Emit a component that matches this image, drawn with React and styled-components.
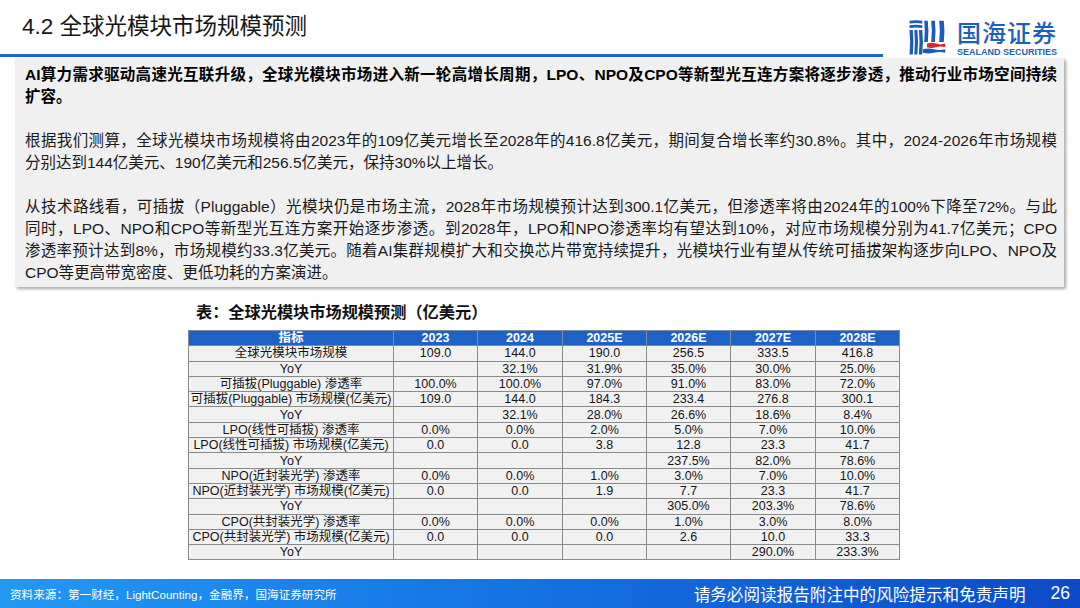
import React from "react";
import styled, { createGlobalStyle } from "styled-components";

const FONT = `"Liberation Sans", "Noto Sans CJK SC", sans-serif`;

const rows = [
  ["全球光模块市场规模", "109.0", "144.0", "190.0", "256.5", "333.5", "416.8"],
  ["YoY", "", "32.1%", "31.9%", "35.0%", "30.0%", "25.0%"],
  ["可插拔(Pluggable) 渗透率", "100.0%", "100.0%", "97.0%", "91.0%", "83.0%", "72.0%"],
  ["可插拔(Pluggable) 市场规模(亿美元)", "109.0", "144.0", "184.3", "233.4", "276.8", "300.1"],
  ["YoY", "", "32.1%", "28.0%", "26.6%", "18.6%", "8.4%"],
  ["LPO(线性可插拔) 渗透率", "0.0%", "0.0%", "2.0%", "5.0%", "7.0%", "10.0%"],
  ["LPO(线性可插拔) 市场规模(亿美元)", "0.0", "0.0", "3.8", "12.8", "23.3", "41.7"],
  ["YoY", "", "", "", "237.5%", "82.0%", "78.6%"],
  ["NPO(近封装光学) 渗透率", "0.0%", "0.0%", "1.0%", "3.0%", "7.0%", "10.0%"],
  ["NPO(近封装光学) 市场规模(亿美元)", "0.0", "0.0", "1.9", "7.7", "23.3", "41.7"],
  ["YoY", "", "", "", "305.0%", "203.3%", "78.6%"],
  ["CPO(共封装光学) 渗透率", "0.0%", "0.0%", "0.0%", "1.0%", "3.0%", "8.0%"],
  ["CPO(共封装光学) 市场规模(亿美元)", "0.0", "0.0", "0.0", "2.6", "10.0", "33.3"],
  ["YoY", "", "", "", "", "290.0%", "233.3%"],
];

const heads = ["指标", "2023", "2024", "2025E", "2026E", "2027E", "2028E"];
const colWidths = [205, 84, 85, 84, 84, 85, 84];

const paragraphs = [
  {
    bold: true,
    lines: [
      "AI算力需求驱动高速光互联升级，全球光模块市场进入新一轮高增长周期，LPO、NPO及CPO等新型光互连方案将逐步渗透，推动行业市场空间持续",
      "扩容。",
    ],
  },
  {
    lines: [
      "根据我们测算，全球光模块市场规模将由2023年的109亿美元增长至2028年的416.8亿美元，期间复合增长率约30.8%。其中，2024-2026年市场规模",
      "分别达到144亿美元、190亿美元和256.5亿美元，保持30%以上增长。",
    ],
  },
  {
    lines: [
      "从技术路线看，可插拔（Pluggable）光模块仍是市场主流，2028年市场规模预计达到300.1亿美元，但渗透率将由2024年的100%下降至72%。与此",
      "同时，LPO、NPO和CPO等新型光互连方案开始逐步渗透。到2028年，LPO和NPO渗透率均有望达到10%，对应市场规模分别为41.7亿美元；CPO",
      "渗透率预计达到8%，市场规模约33.3亿美元。随着AI集群规模扩大和交换芯片带宽持续提升，光模块行业有望从传统可插拔架构逐步向LPO、NPO及",
      "CPO等更高带宽密度、更低功耗的方案演进。",
    ],
  },
];

const SealandMark = () => (
  <svg width="38" height="40" viewBox="0 0 38 40">
    <g fill="#1d5bb8">
      <path d="M1.5 2.8 Q8 1.8 14.3 2.8 V5.6 Q8 4.6 1.5 5.6Z" />
      <path d="M1.5 7.2 Q8 6.2 14.3 7.2 V10 Q8 9 1.5 10Z" />
      <path d="M1.5 12 Q2.8 24 1.5 36.5 H4.8 Q6.1 24 4.8 12Z" />
      <path d="M6.3 12 Q7.6 24 6.3 36.5 H9.4 Q10.7 24 9.4 12Z" />
      <path d="M10.9 12 Q12.2 24 10.9 36.5 H14.3 Q15.6 24 14.3 12Z" />
      <path d="M16.2 2.8 Q17.5 13 16.2 24 H19.8 Q21.1 13 19.8 2.8Z" />
      <path d="M23.2 2.8 Q24.5 13 23.2 24 H26.9 Q28.2 13 26.9 2.8Z" />
      <path d="M31.2 2.8 Q32.5 13 31.2 24 H35.8 Q37.1 13 35.8 2.8Z" />
      <path d="M15 31.2 Q20.5 29.6 26 31.2 T37.2 31.2 V34.8 Q31.6 33.2 26 34.8 T15 34.8Z" />
    </g>
    <path d="M19 25.6 Q23.5 24 28 25.6 T37.2 25.6 V29.2 Q32.6 27.6 28 29.2 T19 29.2Z" fill="#d42a2f" />
  </svg>
);

const App = () => {
  return (
    <>
      <GlobalStyle />
      <Page>
        <Header>
          <TitleBar>
            <Title>4.2 全球光模块市场规模预测</Title>
          </TitleBar>
          <Logo>
            <SealandMark />
            <LogoText>
              <LogoName>国海证券</LogoName>
              <LogoSub>SEALAND SECURITIES</LogoSub>
            </LogoText>
          </Logo>
        </Header>

        <Summary>
          {paragraphs.map((p, i) => (
            <Para key={i}>
              {p.lines.map((l, j) => (
                <Line key={j} bold={p.bold} full={j < p.lines.length - 1}>
                  {l}
                </Line>
              ))}
            </Para>
          ))}
        </Summary>

        <TableSection>
          <Caption>表：全球光模块市场规模预测（亿美元）</Caption>
          <DataTable>
            <colgroup>
              {colWidths.map((w, i) => (
                <col key={i} style={{ width: w }} />
              ))}
            </colgroup>
            <thead>
              <tr>
                {heads.map((h) => (
                  <Th key={h}>{h}</Th>
                ))}
              </tr>
            </thead>
            <tbody>
              {rows.map((r, i) => (
                <tr key={i}>
                  {r.map((c, j) => (
                    <Td key={j}>{c}</Td>
                  ))}
                </tr>
              ))}
            </tbody>
          </DataTable>
        </TableSection>

        <Footer>
          <Source>资料来源：第一财经，LightCounting，金融界，国海证券研究所</Source>
          <Disclaimer>
            请务必阅读报告附注中的风险提示和免责声明
            <PageNo>26</PageNo>
          </Disclaimer>
        </Footer>
      </Page>
    </>
  );
};

export default App;

const GlobalStyle = createGlobalStyle`
  html, body {
    margin: 0;
    padding: 0;
    background: #fff;
  }
  body {
    font-family: ${FONT};
    color: #111;
  }
`;
const Page = styled.div`
  width: 1080px;
  height: 608px;
  overflow: hidden;
  display: flex;
  flex-direction: column;
  background: #fff;
`;
const Header = styled.div`
  display: flex;
  height: 58px;
  flex-shrink: 0;
`;
const TitleBar = styled.div`
  width: 883px;
  height: 57px;
  box-sizing: border-box;
  border-bottom: 3px solid #1e68c4;
  display: flex;
  align-items: center;
  padding-left: 22px;
`;
const Title = styled.h1`
  margin: 0;
  font-size: 22.5px;
  line-height: 28px;
  font-weight: 400;
  color: #161616;
`;
const Logo = styled.div`
  display: flex;
  align-items: flex-start;
  gap: 11px;
  margin-left: 25px;
  padding-top: 18px;
`;
const LogoText = styled.div`
  display: flex;
  flex-direction: column;
  align-items: flex-start;
`;
const LogoName = styled.div`
  font-family: "Noto Sans CJK SC", sans-serif;
  font-size: 24px;
  line-height: 27px;
  font-weight: 500;
  color: #1f5fbb;
  letter-spacing: 1px;
`;
const LogoSub = styled.div`
  margin-top: 2px;
  font-size: 9px;
  line-height: 10px;
  font-weight: 700;
  color: #1f5fbb;
  white-space: nowrap;
`;
const Summary = styled.div`
  margin-left: 15px;
  width: 1049px;
  box-sizing: border-box;
  padding: 6px 7px 3px 10px;
  background: #f0f0f0;
  box-shadow: 2px 2px 3px rgba(0, 0, 0, 0.35);
  font-size: 15.5px;
  line-height: 22px;
  color: #1a1a1a;
`;
const Para = styled.div`
  & + & {
    margin-top: 22px;
  }
`;
const Line = styled.div`
  font-weight: ${(props) => (props.bold ? 700 : 400)};
  color: ${(props) => (props.bold ? "#000" : "#1a1a1a")};
  text-align: justify;
  text-align-last: ${(props) => (props.full ? "justify" : "left")};
`;
const TableSection = styled.div`
  padding-left: 188px;
  margin-top: 15px;
`;
const Caption = styled.div`
  margin-left: 8px;
  font-size: 16.2px;
  line-height: 20px;
  font-weight: 700;
  color: #111;
  margin-bottom: 8px;
`;
const DataTable = styled.table`
  width: 711px;
  table-layout: fixed;
  border-collapse: collapse;
  font-size: 12.5px;
`;
const Th = styled.th`
  height: 14.3px;
  padding: 0;
  line-height: 14px;
  background: #1e62c6;
  color: #fff;
  font-weight: 700;
  border: 1px solid #7a8aa0;
  text-align: center;
`;
const Td = styled.td`
  height: 14.3px;
  padding: 0;
  line-height: 14px;
  background: #f1f1f1;
  color: #151515;
  border: 1px solid #8a8a8a;
  text-align: center;
  white-space: nowrap;
  overflow: hidden;
`;
const Footer = styled.div`
  margin-top: auto;
  height: 29px;
  flex-shrink: 0;
  display: flex;
  align-items: center;
  justify-content: space-between;
  padding: 0 10px;
  background: linear-gradient(90deg, #2399f3 0%, #1679e6 40%, #0c4ac8 100%);
  color: #fff;
`;
const Source = styled.div`
  font-size: 11.6px;
`;
const Disclaimer = styled.div`
  display: flex;
  align-items: center;
  font-size: 16.6px;
  gap: 25px;
`;
const PageNo = styled.span`
  font-size: 17.5px;
`;
